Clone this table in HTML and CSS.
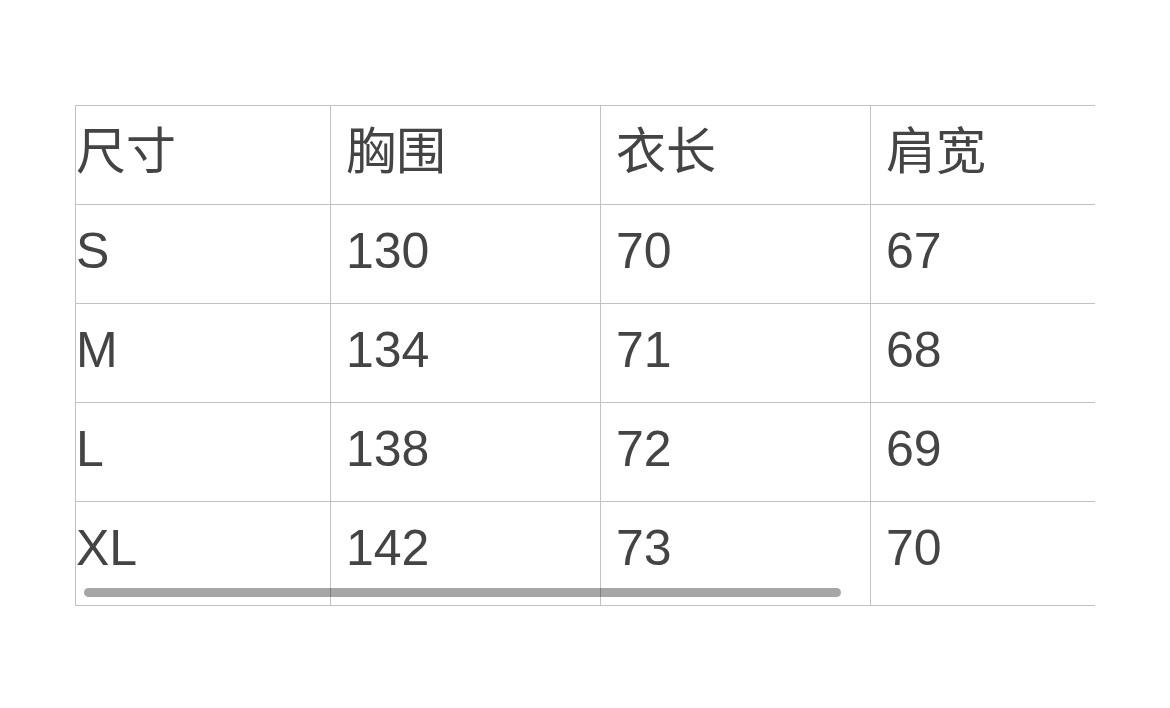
FILE: index.html
```html
<!DOCTYPE html>
<html lang="zh">
<head>
<meta charset="utf-8">
<title>尺码表</title>
<link rel="stylesheet" href="styles.css">
</head>
<body>
<div class="scroller">
  <table class="size-table">
    <colgroup>
      <col class="c1"><col class="c2"><col class="c3"><col class="c4">
    </colgroup>
    <tr><td>尺寸</td><td>胸围</td><td>衣长</td><td>肩宽</td></tr>
    <tr><td>S</td><td>130</td><td>70</td><td>67</td></tr>
    <tr><td>M</td><td>134</td><td>71</td><td>68</td></tr>
    <tr><td>L</td><td>138</td><td>72</td><td>69</td></tr>
    <tr class="last"><td>XL</td><td>142</td><td>73</td><td>70</td></tr>
  </table>
  <div class="thumb"></div>
</div>
</body>
</html>
```

FILE: styles.css
```css
html, body {
  margin: 0;
  padding: 0;
  background: #ffffff;
}

body {
  padding: 105px 0 0 75px;
  font-family: "Liberation Sans", "Noto Sans CJK SC", sans-serif;
  color: #444444;
}

.scroller {
  position: relative;
  width: 1020px;
  overflow: hidden;
}

.size-table {
  border-collapse: collapse;
  table-layout: fixed;
  width: 1335px;
  font-size: 50px;
}

.c1 { width: 255px; }
.c2 { width: 270px; }
.c3 { width: 270px; }
.c4 { width: 540px; }

.size-table td {
  border: 1px solid #c2c2c2;
  height: 99px;
  padding: 21px 0 0 15px;
  box-sizing: border-box;
  line-height: 50px;
  vertical-align: top;
  white-space: nowrap;
}

.size-table tr td:first-child {
  padding-left: 0;
}

.size-table tr.last td {
  height: 104px;
}

.thumb {
  position: absolute;
  left: 9px;
  top: 483px;
  width: 757px;
  height: 9px;
  border-radius: 5px;
  background: rgba(0, 0, 0, 0.35);
}
```
